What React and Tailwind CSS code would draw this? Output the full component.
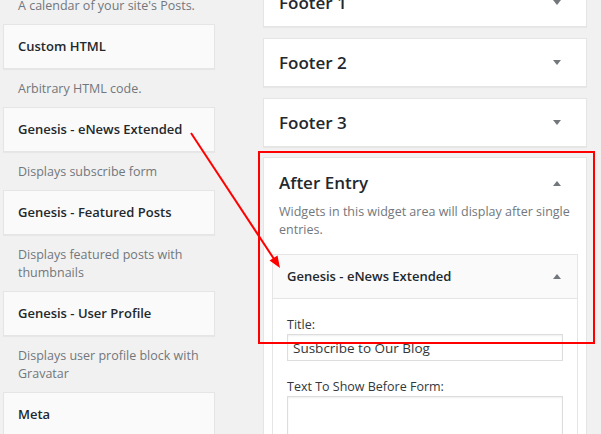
const font = { fontFamily: '"Open Sans", "Noto Sans", sans-serif' };

function Caret({ up }) {
  return (
    <svg width="8" height="5" viewBox="0 0 8 5" className="shrink-0">
      {up ? <polygon points="0,5 8,5 4,0" fill="#72777c" /> : <polygon points="0,0 8,0 4,5" fill="#72777c" />}
    </svg>
  );
}

const available = [
  { name: 'Custom HTML', desc: ['Arbitrary HTML code.'] },
  { name: 'Genesis - eNews Extended', desc: ['Displays subscribe form'] },
  { name: 'Genesis - Featured Posts', desc: ['Displays featured posts with', 'thumbnails'] },
  { name: 'Genesis - User Profile', desc: ['Displays user profile block with', 'Gravatar'] },
  { name: 'Meta', desc: [] },
];

function Desc({ lines }) {
  return (
    <div className="pt-[11px] pb-[9px] pl-[15px] text-[12.5px] leading-[18px] text-[#72777c]">
      {lines.map((l, i) => (
        <div key={i} className="whitespace-nowrap">{l}</div>
      ))}
    </div>
  );
}

function SidebarBox({ title }) {
  return (
    <div className="h-[49px] mb-[11px] bg-white border border-[#e5e5e5] shadow-[0_1px_1px_rgba(0,0,0,0.04)] flex items-center justify-between pl-[15px] pr-[25px]">
      <h2 className="text-[17px] font-semibold text-[#23282d]">{title}</h2>
      <Caret />
    </div>
  );
}

export default function App() {
  return (
    <div className="relative w-[601px] h-[434px] overflow-hidden bg-[#f1f1f1]" style={font}>
      <div className="flex pl-[3px]">
        {/* available widgets */}
        <div className="w-[212px] mt-[-14px]">
          <Desc lines={["A calendar of your site's Posts."]} />
          {available.map(w => (
            <div key={w.name}>
              <div className="h-[45px] bg-[#fafafa] border border-[#e5e5e5] shadow-[0_1px_1px_rgba(0,0,0,0.04)] flex items-center pl-[14px]">
                <h3 className="text-[13px] font-semibold text-[#23282d]">{w.name}</h3>
              </div>
              {w.desc.length > 0 && <Desc lines={w.desc} />}
            </div>
          ))}
        </div>

        {/* widget areas */}
        <div className="w-[324px] ml-[48px] mt-[-22px]">
          <SidebarBox title="Footer 1" />
          <SidebarBox title="Footer 2" />
          <SidebarBox title="Footer 3" />
          <div className="bg-white border border-[#e5e5e5] shadow-[0_1px_1px_rgba(0,0,0,0.04)] mt-[-1px]">
            <div className="flex items-center justify-between pl-[15px] pr-[25px] pt-[13px]">
              <h2 className="text-[17px] leading-[24px] font-semibold text-[#23282d]">After Entry</h2>
              <Caret up />
            </div>
            <p className="mt-[8px] mb-[15px] px-[15px] text-[12.5px] leading-[18px] text-[#72777c] whitespace-nowrap">
              Widgets in this widget area will display after single<br />entries.
            </p>
            <div className="mx-[8px] border border-[#e5e5e5]">
              <div className="h-[44px] bg-[#fafafa] border-b border-[#e5e5e5] flex items-center justify-between pl-[14px] pr-[16px]">
                <h3 className="text-[13px] font-semibold text-[#23282d]">Genesis - eNews Extended</h3>
                <Caret up />
              </div>
              <div className="px-[14px] pt-[17px] pb-[15px] text-[12.5px] text-[#32373c]">
                <label className="block leading-[18px]">Title:</label>
                <input
                  readOnly
                  value="Susbcribe to Our Blog"
                  className="w-full h-[27px] border border-[#ddd] px-[5px] text-[13.5px] text-[#32373c] shadow-[inset_0_1px_2px_rgba(0,0,0,0.07)] outline-none"
                />
                <label className="block leading-[18px] mt-[17px]">Text To Show Before Form:</label>
                <textarea readOnly className="w-full h-[80px] border border-[#ddd] shadow-[inset_0_1px_2px_rgba(0,0,0,0.07)] outline-none resize-none" />
              </div>
            </div>
          </div>
        </div>
      </div>

      {/* annotation overlay */}
      <div className="absolute left-[258px] top-[151px] w-[337px] h-[193px] border-2 border-[#ff0000] pointer-events-none" />
      <svg className="absolute inset-0 pointer-events-none" width="601" height="434">
        <line x1="191" y1="133" x2="274" y2="259" stroke="#ff0000" strokeWidth="2" />
        <polygon points="280,268 269.5,260.5 277.5,255.5" fill="#ff0000" />
      </svg>
    </div>
  );
}
